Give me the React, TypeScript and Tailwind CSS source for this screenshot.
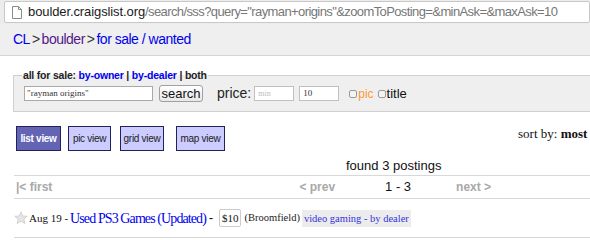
import React from 'react';

const sans = "font-['Liberation_Sans',Arial,sans-serif]";
const serif = "font-['Liberation_Serif','Times_New_Roman',serif]";

const PageIcon = () => (
  <svg width="10" height="13" viewBox="0 0 10 13" className="shrink-0">
    <path d="M0.5 0.5h6l3 3v9h-9z" fill="#fff" stroke="#8a8a8a" />
    <path d="M6.5 0.5v3h3" fill="none" stroke="#8a8a8a" />
  </svg>
);

const Star = () => (
  <svg width="14" height="14" viewBox="0 0 24 24" className="shrink-0">
    <path
      d="M12 1.5l3.1 7 7.4.6-5.6 4.9 1.7 7.4L12 17.5l-6.6 3.9 1.7-7.4L1.5 9.1l7.4-.6z"
      fill="#e6e6e6"
      stroke="#c4c4c4"
      strokeWidth="1.2"
    />
  </svg>
);

const views = [
  { label: 'list view', cls: 'w-[45px]' },
  { label: 'pic view', cls: 'w-[43px] ml-[7px]' },
  { label: 'grid view', cls: 'w-[44px] ml-[9px]' },
  { label: 'map view', cls: 'w-[49px] ml-[12px]' },
];

export default function App() {
  return (
    <div className={`w-[590px] h-[238px] overflow-hidden bg-white ${sans}`}>
      {/* browser address bar */}
      <div className="h-[24px] bg-[#ececec] pl-[4px] pt-[1px]">
        <div className="h-[22px] bg-white border border-[#c8c8c8] rounded-[2px] flex items-center pl-[7px] gap-[6px] whitespace-nowrap overflow-hidden">
          <PageIcon />
          <span className="text-[13px]">
            <span className="text-[#1a1a1a] tracking-[-0.1px]">boulder.craigslist.org</span>
            <span className="text-[#777] tracking-[-0.6px]">/search/sss?query="rayman+origins"&amp;zoomToPosting=&amp;minAsk=&amp;maxAsk=10</span>
          </span>
        </div>
      </div>

      {/* breadcrumbs */}
      <div className="h-[32px] bg-[#efefef] border-b border-[#d6d6d6] flex items-center pl-[13px] text-[14px] tracking-[-0.5px]">
        <span className="text-[#0000ee]">CL</span>
        <span className="text-[#333] mx-[2px]">&gt;</span>
        <span className="text-[#551a8b]">boulder</span>
        <span className="text-[#333] mx-[2px]">&gt;</span>
        <span className="text-[#0000ee]">for sale / wanted</span>
      </div>

      {/* search form */}
      <fieldset className="mt-[12px] ml-[13px] mr-[-20px] h-[44px] border border-[#d0d0d0] bg-[#efefef] px-[10px]">
        <legend className="ml-[-2px] px-[1px] text-[10.5px] tracking-[-0.2px] font-bold text-[#222] leading-[14px]">
          all for sale: <span className="text-[#0000ee]">by-owner</span> | <span className="text-[#0000ee]">by-dealer</span> | both
        </legend>
        <div className="flex items-center mt-[1px] whitespace-nowrap">
          <div className={`w-[129px] h-[15px] bg-white border border-[#a9a9a9] text-[9px] leading-[13px] pl-[2px] text-[#333] ${serif}`}>
            "rayman origins"
          </div>
          <div className="ml-[6px] w-[44px] h-[17px] rounded-[3px] border border-[#a0a0a0] bg-gradient-to-b from-white to-[#e8e8e8] text-[13px] leading-[15px] text-center text-[#111]">
            search
          </div>
          <span className="ml-[14px] text-[14px] text-[#222]">price:</span>
          <div className={`ml-[3px] w-[40px] h-[15px] bg-white border border-[#c0c0c0] text-[8px] leading-[13px] pl-[3px] text-[#bbb] ${serif}`}>
            min
          </div>
          <div className={`ml-[5px] w-[40px] h-[15px] bg-white border border-[#c0c0c0] text-[9px] leading-[13px] pl-[3px] text-[#333] ${serif}`}>
            10
          </div>
          <span className="ml-[10px] w-[8px] h-[8px] border border-[#999] rounded-[2px] bg-[#f4f4f4]" />
          <span className="ml-[1px] text-[12px] text-[#ff9933]">pic</span>
          <span className="ml-[4px] w-[8px] h-[8px] border border-[#999] rounded-[2px] bg-[#f4f4f4]" />
          <span className="ml-[1px] text-[13px] text-[#111]">title</span>
        </div>
      </fieldset>

      {/* view buttons + sort */}
      <div className="flex items-start mt-[14px] pl-[16px] whitespace-nowrap">
        {views.map((v, i) => (
          <div
            key={v.label}
            className={`${v.cls} shrink-0 h-[25px] flex items-center justify-center border border-[#22225a] text-[10px] tracking-[-0.3px] ${
              i === 0 ? 'bg-[#6464b4] text-white font-bold' : 'bg-[#ccccff] text-[#222]'
            }`}
          >
            {v.label}
          </div>
        ))}
        <div className={`shrink-0 ml-[293px] mt-[-2px] text-[13px] text-[#111] ${serif}`}>
          sort by: <b>most recent</b>
        </div>
      </div>

      {/* found */}
      <div className="mt-[7px] pl-[346px] text-[13px] text-[#111] leading-[16px]">found 3 postings</div>

      {/* pager */}
      <div className="mt-[1px] ml-[14px] border-t border-b border-[#d8d8d8] h-[24px] flex items-center text-[12px] font-bold whitespace-nowrap">
        <span className="ml-[2px] text-[#a8a8a8]">|&lt; first</span>
        <span className="ml-[247px] text-[#a8a8a8]">&lt; prev</span>
        <span className="ml-[50px] text-[13px] font-normal text-[#111]">1 - 3</span>
        <span className="ml-[45px] text-[#a8a8a8]">next &gt;</span>
      </div>

      {/* listing */}
      <div className={`ml-[14px] h-[39px] border-b border-[#d8d8d8] flex items-center whitespace-nowrap ${serif}`}>
        <Star />
        <span className="ml-[1px] text-[11px] text-[#111]">Aug 19 -</span>
        <span className="ml-[2px] text-[14px] tracking-[-0.9px] text-[#0000ee]">Used PS3 Games (Updated)</span>
        <span className="ml-[3px] text-[12px] font-bold text-[#111]">-</span>
        <span className="ml-[6px] px-[2px] border border-[#ccc] rounded-[2px] text-[11px] leading-[16px] text-[#111]">$10</span>
        <span className="ml-[3px] text-[10.5px] text-[#222]">(Broomfield)</span>
        <span className="ml-[2px] px-[2px] bg-[#ececec] text-[10.5px] leading-[17px] text-[#3333dd]">video gaming - by dealer</span>
      </div>
    </div>
  );
}
